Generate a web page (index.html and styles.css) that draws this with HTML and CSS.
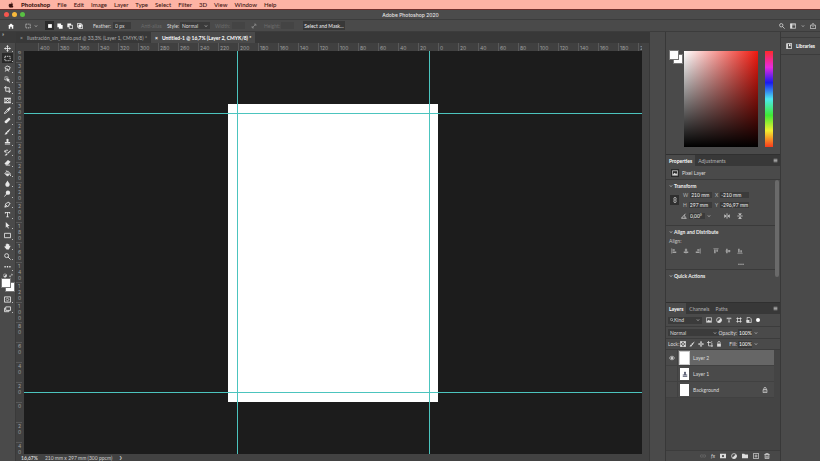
FILE: index.html
```
<!DOCTYPE html>
<html lang="en">
<head>
    <meta charset="UTF-8">
    <meta name="viewport" content="width=device-width, initial-scale=1.0">
    <title>Adobe Photoshop 2020</title>
    <link rel="stylesheet" href="styles.css">
</head>
<body>
    <!-- Icon set -->
    <svg class="sprite">
        <symbol id="apple" viewBox="0 0 16 16"><path class="f" d="M11 1c0 2-1.500 3-3 3 0-2 1.500-3 3-3zM8 5c1 0 2-1 3.500-.7 1 .1 1.800.6 2.300 1.300-2.500 1.700-2 4.600.5 5.600C13.500 13.500 12.300 15 11 15c-1.200 0-1.500-.6-2.800-.6S6.500 15 5.400 15C3 14.800.9 10.500 2 7.400 3.200 4 6.300 4 8 5z"/></symbol>
        <symbol id="home" viewBox="0 0 16 16"><path class="f" d="M8 1L0 8h2v7h4v-5h4v5h4V8h2z"/></symbol>
        <symbol id="move" viewBox="0 0 16 16"><path d="M8 2v12M2 8h12"/><path class="f" d="M8 0l3 4H5zM8 16l3-4H5zM0 8l4-3v6zM16 8l-4-3v6z"/></symbol>
        <symbol id="marquee" viewBox="0 0 16 16"><path stroke-dasharray="3 2" d="M2 3h12v10H2z"/></symbol>
        <symbol id="lasso" viewBox="0 0 16 16"><path d="M5 11L2 6l5-4 7 3-2 6-6 1zM5 11l-2 4M6 7l5 8"/></symbol>
        <symbol id="select" viewBox="0 0 16 16"><path stroke-dasharray="2 1" d="M2 2h7v7H2z"/><path class="f" d="M5 4l9 5-3 1 3 4-2 1-3-4-2 2z"/></symbol>
        <symbol id="crop" viewBox="0 0 16 16"><path d="M4 0v12h12M0 4h12v12"/></symbol>
        <symbol id="frame" viewBox="0 0 16 16"><path d="M2 3h12v10H2zM2 3l12 10M14 3L2 13M0 3h16M0 13h16"/></symbol>
        <symbol id="dropper" viewBox="0 0 16 16"><path d="M8 6l-6 6-1 3 3-1 6-6"/><path class="f" d="M7 4l2 0 3-3c2-1 4 1 3 3l-3 3v2l-1 1-5-5z"/></symbol>
        <symbol id="heal" viewBox="0 0 16 16"><path class="f" d="M2 9l8-7c3-1 5 2 4 4l-8 8c-3 1-6-2-4-5z"/></symbol>
        <symbol id="brush" viewBox="0 0 16 16"><path class="f" d="M15 1l-9 7 3 3 6-9zM6 9c-3 0-2 4-5 5 4 2 7 0 7-3z"/></symbol>
        <symbol id="stamp" viewBox="0 0 16 16"><path class="f" d="M6 7c-3-7 7-7 4 0v2h4v3H2V9h4zM2 13h12v2H2z"/></symbol>
        <symbol id="history" viewBox="0 0 16 16"><path class="f" d="M15 3l-8 6 2 2 7-7zM6 10c-3 0-2 4-5 4 4 2 6 0 7-2z"/><path d="M2 7c0-4 4-5 7-4M2 3v4h4"/></symbol>
        <symbol id="eraser" viewBox="0 0 16 16"><path class="f" d="M9 2l6 4-6 7H4l-3-3z"/><path d="M4 14h10"/></symbol>
        <symbol id="bucket" viewBox="0 0 16 16"><path d="M2 8l6-6 6 6-6 6zM5 1l4 5"/><path class="f" d="M2 8h12l-6 6zM15 9c2 3 1 5 0 5s-2-2 0-5z"/></symbol>
        <symbol id="drop" viewBox="0 0 16 16"><path class="f" d="M8 1c2 4 5 6 5 9 0 7-10 7-10 0 0-3 3-5 5-9z"/></symbol>
        <symbol id="dodge" viewBox="0 0 16 16"><circle class="f" cx="9" cy="6" r="5"/><path d="M6 9l-5 6"/></symbol>
        <symbol id="pen" viewBox="0 0 16 16"><path d="M2 14l2-8 6-3 3 3-3 6zM2 14l5-5M10 2l4 4"/></symbol>
        <symbol id="type" viewBox="0 0 16 16"><path class="f" d="M2 2h12v4h-1.500L12 4H9v8l2 1v1H5v-1l2-1V4H4l-.5 2H2z"/></symbol>
        <symbol id="arrow" viewBox="0 0 16 16"><path class="f" d="M4 0l9 9H9l2 5-2 1-2-5-3 3z"/></symbol>
        <symbol id="rect" viewBox="0 0 16 16"><path d="M1 3h14v10H1z"/></symbol>
        <symbol id="hand" viewBox="0 0 16 16"><path class="f" d="M4 8V3h2V1h2v1h2v1h2v4l2-1 1 1-4 8H6L1 9l1-2z"/></symbol>
        <symbol id="search" viewBox="0 0 16 16"><circle cx="6" cy="6" r="4.500"/><path d="M9 9l6 6"/></symbol>
        <symbol id="dots" viewBox="0 0 16 16"><path class="f" d="M1 7h3v3H1zM6.500 7h3v3h-3zM12 7h3v3h-3z"/></symbol>
        <symbol id="mask" viewBox="0 0 16 16"><path d="M1 2h14v12H1z"/><circle cx="8" cy="8" r="3" stroke-dasharray="2 1"/></symbol>
        <symbol id="screen" viewBox="0 0 16 16"><path d="M4 2h11v8H4zM4 5H1v8h10v-3"/></symbol>
        <symbol id="newsel" viewBox="0 0 16 16"><path class="f" d="M3 3h10v10H3z"/></symbol>
        <symbol id="addsel" viewBox="0 0 16 16"><path class="f" d="M1 1h10v4h4v10H5v-4H1z"/></symbol>
        <symbol id="subsel" viewBox="0 0 16 16"><path class="f" d="M1 1h10v4H5v6H1z"/><path d="M6 6h9v9H6z"/></symbol>
        <symbol id="intsel" viewBox="0 0 16 16"><path d="M1 1h10v10H1zM5 5h10v10H5z"/><path class="f" d="M5 5h6v6H5z"/></symbol>
        <symbol id="swap" viewBox="0 0 16 16"><path d="M3 13L13 3M8 3h5v5M3 8v5h5"/></symbol>
        <symbol id="chev" viewBox="0 0 16 16"><path d="M3 5l5 6 5-6"/></symbol>
        <symbol id="workspace" viewBox="0 0 16 16"><path d="M1 2h14v12H1zM1 5h14"/><path class="f" d="M1 2h5v12H1z"/></symbol>
        <symbol id="share" viewBox="0 0 16 16"><path d="M5 6H1v9h14V6h-4M8 11V2M5 4l3-3 3 3"/></symbol>
        <symbol id="book" viewBox="0 0 16 16"><path d="M4 1h11v14H4zM1 1v14h3"/><path class="f" d="M8 3h4v6l-2-2-2 2z"/></symbol>
        <symbol id="menu" viewBox="0 0 16 16"><path d="M2 4h12M2 8h12M2 12h12"/></symbol>
        <symbol id="image" viewBox="0 0 16 16"><path d="M1 2h14v12H1z"/><path class="f" d="M2 13l4-6 3 3 2-2 3 5z"/></symbol>
        <symbol id="link" viewBox="0 0 16 16"><path d="M5 7V4c0-4 6-4 6 0v3M5 9v3c0 4 6 4 6 0V9M8 5v6"/></symbol>
        <symbol id="angle" viewBox="0 0 16 16"><path d="M15 14H1L12 2M8 6c3 2 3 5 3 8"/></symbol>
        <symbol id="fliph" viewBox="0 0 16 16"><path d="M8 1v14"/><path class="f" d="M1 3l5 5-5 5zM15 3l-5 5 5 5z"/></symbol>
        <symbol id="flipv" viewBox="0 0 16 16"><path d="M1 8h14"/><path class="f" d="M3 1l5 5 5-5zM3 15l5-5 5 5z"/></symbol>
        <symbol id="al" viewBox="0 0 16 16"><path d="M2 1v14"/><path class="f" d="M4 3h6v4H4zM4 9h10v4H4z"/></symbol>
        <symbol id="ac" viewBox="0 0 16 16"><path d="M8 1v14"/><path class="f" d="M5 3h6v4H5zM2 9h12v4H2z"/></symbol>
        <symbol id="ar" viewBox="0 0 16 16"><path d="M14 1v14"/><path class="f" d="M6 3h6v4H6zM2 9h10v4H2z"/></symbol>
        <symbol id="at" viewBox="0 0 16 16"><path d="M1 2h14"/><path class="f" d="M3 4h4v10H3zM9 4h4v6H9z"/></symbol>
        <symbol id="am" viewBox="0 0 16 16"><path d="M1 8h14"/><path class="f" d="M3 2h4v12H3zM9 5h4v6H9z"/></symbol>
        <symbol id="ab" viewBox="0 0 16 16"><path d="M1 14h14"/><path class="f" d="M3 2h4v10H3zM9 6h4v6H9z"/></symbol>
        <symbol id="adjust" viewBox="0 0 16 16"><circle cx="8" cy="8" r="6.500"/><path class="f" d="M13 3a7 7 0 0 1-10 10z"/></symbol>
        <symbol id="shape" viewBox="0 0 16 16"><path d="M4 1v14M12 1v14M1 4h14M1 12h14"/></symbol>
        <symbol id="smart" viewBox="0 0 16 16"><path d="M3 1h7l4 4v10H3z"/><path class="f" d="M1 8h8v7H1z"/></symbol>
        <symbol id="checker" viewBox="0 0 16 16"><path d="M1 1h14v14H1z"/><path class="f" d="M1 1h5v5H1zM10 1h5v5h-5zM6 6h4v4H6zM1 10h5v5H1zM10 10h5v5h-5z"/></symbol>
        <symbol id="artboard" viewBox="0 0 16 16"><path d="M4 0v13h12M0 4h10M13 5v11M10 4l4-3"/></symbol>
        <symbol id="lock" viewBox="0 0 16 16"><path class="f" d="M3 7h10v8H3z"/><path d="M5 7V4c0-4 6-4 6 0v3"/></symbol>
        <symbol id="locko" viewBox="0 0 16 16"><path d="M3 7h10v8H3zM5 7V4c0-4 6-4 6 0v3M8 10v3"/></symbol>
        <symbol id="eye" viewBox="0 0 16 16"><path d="M1 8c4-6 10-6 14 0-4 6-10 6-14 0z"/><circle class="f" cx="8" cy="8" r="3"/></symbol>
        <symbol id="chain" viewBox="0 0 16 16"><path d="M7 5H3c-3 0-3 6 0 6h4M9 5h4c3 0 3 6 0 6H9M5 8h6"/></symbol>
        <symbol id="addmask" viewBox="0 0 16 16"><path class="f" fill-rule="evenodd" d="M0 2h16v12H0zM8 5a3 3 0 1 0 0 6 3 3 0 0 0 0-6z"/></symbol>
        <symbol id="folder" viewBox="0 0 16 16"><path class="f" d="M0 2h6l2 2h8v10H0z"/></symbol>
        <symbol id="plus" viewBox="0 0 16 16"><path d="M1 1h14v14H1zM8 4v8M4 8h8"/></symbol>
        <symbol id="trash" viewBox="0 0 16 16"><path d="M1 4h14M5 4V1h6v3M3 4v11h10V4M6 7v6M10 7v6"/></symbol>
    </svg>

    <div class="app">
        <nav class="menubar">
            <svg class="icon"><use href="#apple"/></svg>
            <a href="#" class="brand">Photoshop</a>
            <a href="#">File</a>
            <a href="#">Edit</a>
            <a href="#">Image</a>
            <a href="#">Layer</a>
            <a href="#">Type</a>
            <a href="#">Select</a>
            <a href="#">Filter</a>
            <a href="#">3D</a>
            <a href="#">View</a>
            <a href="#">Window</a>
            <a href="#">Help</a>
        </nav>

        <header class="titlebar">
            <div class="lights">
                <button class="light red" aria-label="Close"></button>
                <button class="light yellow" aria-label="Minimize"></button>
                <button class="light green" aria-label="Zoom"></button>
            </div>
            <h1>Adobe Photoshop 2020</h1>
        </header>

        <div class="options">
            <button class="home" aria-label="Home"><svg class="icon"><use href="#home"/></svg></button>
            <button class="preset" aria-label="Tool preset"><svg class="icon"><use href="#marquee"/></svg><svg class="icon tiny"><use href="#chev"/></svg></button>
            <div class="modes">
                <button class="on" aria-label="New selection"><svg class="icon"><use href="#newsel"/></svg></button>
                <button aria-label="Add"><svg class="icon"><use href="#addsel"/></svg></button>
                <button aria-label="Subtract"><svg class="icon"><use href="#subsel"/></svg></button>
                <button aria-label="Intersect"><svg class="icon"><use href="#intsel"/></svg></button>
            </div>
            <label class="feather">Feather: <input type="text" value="0 px"></label>
            <span class="anti dim">Anti-alias</span>
            <label class="style">Style:
                <span class="drop"><select><option>Normal</option></select><svg class="icon tiny"><use href="#chev"/></svg></span>
            </label>
            <label class="size dim">Width: <input type="text" disabled></label>
            <svg class="icon swap"><use href="#swap"/></svg>
            <label class="size dim">Height: <input type="text" disabled></label>
            <button class="mask">Select and Mask...</button>
            <div class="shortcuts">
                <svg class="icon"><use href="#search"/></svg>
                <svg class="icon"><use href="#workspace"/></svg>
                <svg class="icon tiny"><use href="#chev"/></svg>
                <svg class="icon"><use href="#share"/></svg>
            </div>
        </div>

        <main class="workspace">
            <aside class="toolbar">
                <div class="grip">»</div>
                <div class="tools" id="tools"></div>
                <div class="mini"><svg class="icon"><use href="#adjust"/></svg><svg class="icon"><use href="#swap"/></svg></div>
                <div class="swatches"><i></i><i></i></div>
                <button class="tool" aria-label="Quick mask"><svg class="icon"><use href="#mask"/></svg></button>
                <button class="tool" aria-label="Screen mode"><svg class="icon"><use href="#screen"/></svg></button>
            </aside>

            <section class="document">
                <div class="tabs">
                    <a href="#" class="tab"><span>×</span>Ilustración_sin_titulo.psd @ 33,3% (Layer 1, CMYK/8) *</a>
                    <a href="#" class="tab active"><span>×</span>Untitled-1 @ 16,7% (Layer 2, CMYK/8) *</a>
                </div>
                <div class="view">
                    <div class="corner"></div>
                    <div class="ruler-h" id="rulerH"></div>
                    <div class="ruler-v"><div class="marks" id="rulerV"></div></div>
                    <div class="canvas">
                        <div class="page"></div>
                        <div class="guide h top"></div>
                        <div class="guide h bottom"></div>
                        <div class="guide v left"></div>
                        <div class="guide v right"></div>
                    </div>
                    <div class="scroll"></div>
                </div>
                <footer class="status"><b>16,67%</b><span>210 mm x 297 mm (300 ppcm)</span><span class="more">❯</span></footer>
            </section>

            <div class="dock"></div>

            <aside class="panels">
                <section class="color">
                    <div class="swatches"><i></i><i></i></div>
                    <div class="field"></div>
                    <div class="hue"></div>
                </section>

                <section class="properties">
                    <div class="panel-tabs">
                        <button class="active">Properties</button>
                        <button>Adjustments</button>
                        <svg class="icon menu"><use href="#menu"/></svg>
                    </div>
                    <div class="kind"><svg class="icon boxed"><use href="#image"/></svg>Pixel Layer</div>
                    <div class="props">
                        <div class="groups">
                            <div class="group transform">
                                <h2><svg class="icon tiny"><use href="#chev"/></svg>Transform</h2>
                                <div class="fields">
                                    <button class="link" aria-label="Link"><svg class="icon"><use href="#link"/></svg></button>
                                    <label>W <input type="text" value="210 mm"></label>
                                    <label>X <input type="text" value="-210 mm"></label>
                                    <label>H <input type="text" value="297 mm"></label>
                                    <label>Y <input type="text" value="-296,97 mm"></label>
                                </div>
                                <div class="rotate">
                                    <svg class="icon"><use href="#angle"/></svg>
                                    <input type="text" value="0,00°" aria-label="Angle"><svg class="icon tiny"><use href="#chev"/></svg>
                                    <svg class="icon flip"><use href="#fliph"/></svg>
                                    <svg class="icon"><use href="#flipv"/></svg>
                                </div>
                            </div>
                            <div class="group align">
                                <h2><svg class="icon tiny"><use href="#chev"/></svg>Align and Distribute</h2>
                                <p>Align:</p>
                                <div class="align-row">
                                    <svg class="icon"><use href="#al"/></svg>
                                    <svg class="icon"><use href="#ac"/></svg>
                                    <svg class="icon"><use href="#ar"/></svg>
                                    <svg class="icon split"><use href="#at"/></svg>
                                    <svg class="icon"><use href="#am"/></svg>
                                    <svg class="icon"><use href="#ab"/></svg>
                                </div>
                                <svg class="icon more"><use href="#dots"/></svg>
                            </div>
                            <div class="group">
                                <h2><svg class="icon tiny"><use href="#chev"/></svg>Quick Actions</h2>
                            </div>
                        </div>
                        <div class="bar"></div>
                    </div>
                </section>

                <section class="layers">
                    <div class="panel-tabs">
                        <button class="active">Layers</button>
                        <button>Channels</button>
                        <button>Paths</button>
                        <svg class="icon menu"><use href="#menu"/></svg>
                    </div>
                    <div class="row filter">
                        <span class="drop wide"><svg class="icon tiny"><use href="#search"/></svg><select aria-label="Filter"><option>Kind</option></select><svg class="icon tiny"><use href="#chev"/></svg></span>
                        <svg class="icon"><use href="#image"/></svg>
                        <svg class="icon"><use href="#adjust"/></svg>
                        <svg class="icon"><use href="#type"/></svg>
                        <svg class="icon"><use href="#shape"/></svg>
                        <svg class="icon"><use href="#smart"/></svg>
                        <i class="toggle"></i>
                    </div>
                    <div class="row">
                        <span class="drop blend"><select aria-label="Blend mode"><option>Normal</option></select><svg class="icon tiny"><use href="#chev"/></svg></span>
                        <label class="amount">Opacity: <input type="text" value="100%"></label><svg class="icon tiny"><use href="#chev"/></svg>
                    </div>
                    <div class="row locks">
                        <span>Lock:</span>
                        <svg class="icon"><use href="#checker"/></svg>
                        <svg class="icon"><use href="#brush"/></svg>
                        <svg class="icon"><use href="#move"/></svg>
                        <svg class="icon"><use href="#artboard"/></svg>
                        <svg class="icon"><use href="#lock"/></svg>
                        <label class="amount">Fill: <input type="text" value="100%"></label><svg class="icon tiny"><use href="#chev"/></svg>
                    </div>
                    <ul class="list">
                        <li class="selected"><span class="vis"><svg class="icon"><use href="#eye"/></svg></span><span class="thumb"></span>Layer 2</li>
                        <li><span class="vis"></span><span class="thumb"><svg class="icon art"><use href="#stamp"/></svg></span>Layer 1</li>
                        <li><span class="vis"></span><span class="thumb"></span>Background<svg class="icon locked"><use href="#locko"/></svg></li>
                    </ul>
                    <div class="actions">
                        <svg class="icon dim"><use href="#chain"/></svg>
                        <em>fx</em>
                        <svg class="icon"><use href="#addmask"/></svg>
                        <svg class="icon"><use href="#adjust"/></svg>
                        <svg class="icon"><use href="#folder"/></svg>
                        <svg class="icon"><use href="#plus"/></svg>
                        <svg class="icon"><use href="#trash"/></svg>
                    </div>
                </section>
            </aside>

            <aside class="libraries">
                <button><svg class="icon"><use href="#book"/></svg>Libraries</button>
            </aside>
        </main>
    </div>

    <script src="script.js"></script>
</body>
</html>
```
FILE: styles.css
```
* {
    margin: 0;
    padding: 0;
    box-sizing: border-box;
}

body {
    background-color: #4a4a4a;
    color: #dcdcdc;
    font-family: Lato, "Liberation Sans", sans-serif;
    font-size: 5px;
    line-height: 6px;
    overflow: hidden;
}

a {
    color: inherit;
    text-decoration: none;
}

button, input, select {
    font: inherit;
    color: inherit;
    background: none;
    border: none;
    appearance: none;
    min-width: 0;
}

button {
    display: flex;
    align-items: center;
    justify-content: center;
}

.sprite {
    display: none;
}

.icon {
    width: 6px;
    height: 6px;
    flex: none;
    display: block;
    fill: none;
    stroke: currentColor;
    stroke-width: 2;
}

.icon.tiny {
    width: 4px;
    height: 4px;
}

.f {
    fill: currentColor;
    stroke: none;
}

.dim {
    color: #6c6c6c;
}

.app {
    display: flex;
    flex-direction: column;
    height: 100vh;
}

/* Menu bar */
.menubar {
    display: flex;
    align-items: center;
    gap: 7px;
    height: 9px;
    padding-left: 8px;
    background-color: #fdb3a4;
    color: #3a1410;
    font-size: 6px;
    font-weight: 500;
}

.menubar .brand {
    font-weight: 900;
}

.titlebar {
    display: flex;
    align-items: center;
    height: 10px;
    border-top: 1px solid #70302c;
    padding-left: 4px;
    background-color: #4b4b4b;
}

.titlebar h1 {
    flex: 1;
    padding-right: 24px;
    text-align: center;
    font-family: Inter, "Liberation Sans", sans-serif;
    font-size: 5px;
    font-weight: 500;
    color: #e4e4e4;
}

.lights {
    display: flex;
    gap: 3px;
}

.light {
    width: 5px;
    height: 5px;
    border-radius: 50%;
}

.red { background-color: #f5564e; }
.yellow { background-color: #f6b93b; }
.green { background-color: #58c043; }

/* Options bar */
.options {
    display: flex;
    align-items: center;
    height: 13px;
    border-top: 1px solid #3c3c3c;
    border-bottom: 1px solid #3c3c3c;
    padding: 0 4px 0 8px;
    background-color: #4a4a4a;
}

.options input, .drop {
    height: 7px;
    background-color: #3b3b3b;
    padding: 0 2px;
}

.drop {
    display: flex;
    align-items: center;
}

.drop select {
    flex: 1;
}

.home {
    color: #ffffff;
    margin-right: 11px;
}

.preset {
    gap: 3px;
    padding-right: 7px;
}

.modes {
    display: flex;
    gap: 1px;
    padding-right: 9px;
}

.modes button {
    width: 9px;
    height: 9px;
    color: #ffffff;
}

.modes .on {
    background-color: #2c2c2c;
}

.options label {
    display: flex;
    align-items: center;
    justify-content: space-between;
}

.feather {
    width: 38px;
}

.feather input {
    width: 18px;
}

.anti {
    width: 36px;
    padding-left: 10px;
}

.style {
    width: 43px;
}

.style .drop {
    width: 30px;
}

.options .size {
    width: 30px;
    margin-left: 5px;
}

.options .size input {
    width: 13px;
    background-color: #444444;
}

.swap {
    margin: 0 2px 0 6px;
    color: #8c8c8c;
}

.mask {
    width: 42px;
    height: 9px;
    margin-left: 9px;
    background-color: #383838;
    color: #f0f0f0;
    white-space: nowrap;
}

.shortcuts {
    display: flex;
    align-items: center;
    gap: 5px;
    margin-left: auto;
}

/* Main area */
.workspace {
    display: flex;
    flex: 1;
    min-height: 0;
}

.toolbar {
    display: flex;
    flex-direction: column;
    align-items: center;
    width: 16px;
    background-color: #4a4a4a;
    border-right: 1px solid #3a3a3a;
}

.grip {
    align-self: stretch;
    height: 11px;
    padding-left: 2px;
    line-height: 5px;
    background-color: #3a3a3a;
}

.tools {
    display: flex;
    flex-direction: column;
    justify-content: space-between;
    height: 229px;
}

.tool {
    position: relative;
    width: 11px;
    height: 10px;
    color: #e6e6e6;
}

.tool .icon {
    width: 7px;
    height: 7px;
}

.tool::after {
    content: "";
    position: absolute;
    right: 0;
    bottom: 1px;
    width: 1px;
    height: 1px;
    background-color: #bbbbbb;
}

.tool.on {
    background-color: #2a2a2a;
}

.mini {
    display: flex;
    gap: 2px;
    padding: 1px 0;
}

.mini .icon {
    width: 4px;
    height: 5px;
}

.swatches {
    position: relative;
    width: 12px;
    height: 13px;
    margin-bottom: 2px;
}

.swatches i {
    position: absolute;
    left: 0;
    top: 0;
    z-index: 1;
    width: 8px;
    height: 8px;
    background-color: #ffffff;
    outline: 1px solid #777777;
}

.swatches i + i {
    left: 4px;
    top: 4px;
    z-index: 0;
}

/* Document */
.document {
    display: flex;
    flex-direction: column;
    flex: 1;
    min-width: 0;
}

.tabs {
    display: flex;
    height: 11px;
    background-color: #383838;
}

.tab {
    display: flex;
    align-items: center;
    padding: 0 4px;
    color: #b0b0b0;
    white-space: nowrap;
}

.tab span {
    margin-right: 4px;
}

.tab.active {
    background-color: #4a4a4a;
    color: #ffffff;
    font-weight: 700;
}

.view {
    flex: 1;
    min-height: 0;
    display: grid;
    grid-template-columns: 8px 1fr 7px;
    grid-template-rows: 8px 1fr;
    background-color: #3c3c3c;
}

.corner, .ruler-h, .ruler-v {
    background-color: #404040;
    color: #a0a0a0;
    font-family: Inter, "Liberation Sans", sans-serif;
    overflow: hidden;
}

.ruler-h {
    display: flex;
    padding-left: 14px;
}

.ruler-h span {
    flex: none;
    width: 20px;
    height: 8px;
    padding: 2px 0 0 1px;
    border-left: 1px solid #585858;
}

.marks {
    margin-top: -9px;
}

.marks span {
    display: block;
    width: 6px;
    height: 20px;
    padding-left: 2px;
    border-top: 1px solid #585858;
    word-break: break-all;
}

.canvas {
    position: relative;
    background-color: #1c1c1c;
    overflow: hidden;
}

.page {
    position: absolute;
    left: 204px;
    top: 53px;
    width: 210px;
    height: 298px;
    background-color: #ffffff;
}

.guide {
    position: absolute;
    background-color: #4cc4be;
}

.guide.h {
    left: 0;
    right: 0;
    height: 1px;
}

.guide.v {
    top: 0;
    bottom: 0;
    width: 1px;
}

.guide.top { top: 62px; }
.guide.bottom { top: 341px; }
.guide.left { left: 213px; }
.guide.right { left: 405px; }

.scroll {
    background-color: #424242;
    grid-column: 3;
    grid-row: 1 / 3;
}

.status {
    display: flex;
    align-items: center;
    gap: 7px;
    height: 7px;
    padding-left: 5px;
    background-color: #424242;
    color: #d0d0d0;
}

.status .more {
    font-size: 4px;
}

.dock {
    width: 17px;
    background-color: #4a4a4a;
    border-left: 1px solid #383838;
    border-right: 1px solid #383838;
}

/* Panels */
.panels {
    display: flex;
    flex-direction: column;
    width: 114px;
}

.color {
    display: flex;
    height: 122px;
    padding: 19px 7px 0 4px;
}

.color .swatches {
    margin-right: 2px;
}

.field {
    flex: 1;
    height: 96px;
    background-image: linear-gradient(to top, #000000, transparent), linear-gradient(to right, #ffffff, #f0190f);
}

.hue {
    width: 8px;
    height: 96px;
    margin-left: 7px;
    background-image: linear-gradient(#ff2a2a, #e62adf 17%, #1a1af0 33%, #4de8f0 50%, #3fea34 67%, #f2ee30 83%, #fa3a1c);
}

.panel-tabs {
    display: flex;
    align-items: center;
    height: 12px;
    background-color: #383838;
    border-top: 1px solid #303030;
    padding-right: 2px;
}

.panel-tabs button {
    height: 11px;
    padding: 0 3px;
    color: #b4b4b4;
}

.panel-tabs .active {
    background-color: #4a4a4a;
    color: #ffffff;
    font-weight: 700;
}

.panel-tabs .menu {
    width: 5px;
    height: 5px;
    margin-left: auto;
}

.properties {
    height: 148px;
}

.kind {
    display: flex;
    align-items: center;
    gap: 3px;
    height: 14px;
    padding-left: 5px;
    border-bottom: 1px solid #3a3a3a;
}

.boxed {
    width: 8px;
    height: 8px;
    padding: 1px;
    background-color: #2b2b2b;
}

.props {
    display: flex;
}

.groups {
    flex: 1;
}

.group {
    padding: 3px 3px 0;
    border-bottom: 1px solid #3a3a3a;
}

.group:last-child {
    border-bottom: none;
}

.group h2 {
    display: flex;
    align-items: center;
    gap: 1px;
    font-size: 5px;
    font-weight: 700;
    color: #f0f0f0;
}

.transform {
    height: 46px;
}

.align {
    height: 44px;
}

.fields {
    display: grid;
    grid-template-columns: 14px 32px 34px;
    grid-template-rows: 8px 8px;
    row-gap: 2px;
    margin-top: 2px;
}

.fields .link {
    grid-row: 1 / 3;
    width: 9px;
    height: 10px;
    align-self: center;
    margin-left: 1px;
    background-color: #2f2f2f;
}

.fields label {
    display: flex;
    align-items: center;
    gap: 2px;
    color: #b8b8b8;
}

.fields input, .rotate input {
    flex: 1;
    height: 6px;
    padding-left: 1px;
    margin-right: 3px;
    background-color: #3b3b3b;
    color: #f0f0f0;
}

.fields label:nth-of-type(even) input {
    margin-right: 0;
}

.rotate {
    display: flex;
    align-items: center;
    height: 8px;
    margin-top: 3px;
    padding-left: 12px;
    gap: 2px;
}

.rotate input {
    flex: none;
    width: 16px;
    margin-right: 0;
}

.rotate .flip {
    margin: 0 5px 0 11px;
}

.align p {
    margin-top: 3px;
    color: #c4c4c4;
}

.align-row {
    display: flex;
    gap: 6px;
    margin-top: 4px;
    padding-left: 2px;
    color: #a4a4a4;
}

.align-row .split {
    margin-left: 6px;
}

.align .more {
    margin: 7px 0 0 69px;
}

.bar {
    width: 4px;
    height: 97px;
    margin-right: 1px;
    border-radius: 2px;
    background-color: #6a6a6a;
}

/* Layers panel */
.layers {
    display: flex;
    flex-direction: column;
    flex: 1;
}

.row {
    display: flex;
    align-items: center;
    height: 12px;
    padding: 0 22px 0 2px;
    border-bottom: 1px solid #3c3c3c;
}

.filter {
    height: 13px;
    padding-right: 0;
    gap: 4px;
}

.wide {
    width: 34px;
}

.blend {
    width: 51px;
}

.toggle {
    width: 4px;
    height: 4px;
    border-radius: 50%;
    background-color: #ffffff;
}

.row .amount {
    display: flex;
    align-items: center;
    gap: 1px;
    margin: 0 2px 0 auto;
}

.row input {
    width: 14px;
    height: 7px;
    padding-left: 1px;
    background-color: #3b3b3b;
    color: #ffffff;
}

.locks {
    height: 11px;
}

.locks .icon + .icon {
    margin-left: 3px;
}

.locks span {
    width: 12px;
}

.list {
    flex: 1;
    list-style: none;
    padding-right: 6px;
    background-color: #444444;
}

.list li {
    display: flex;
    align-items: center;
    height: 16px;
    background-color: #4a4a4a;
    border-bottom: 1px solid #414141;
}

.list .selected {
    background-color: #666666;
}

.vis {
    display: flex;
    align-items: center;
    justify-content: center;
    align-self: stretch;
    width: 12px;
    background-color: #4a4a4a;
    border-right: 1px solid #414141;
}

.thumb {
    display: flex;
    align-items: center;
    justify-content: center;
    width: 9px;
    height: 12px;
    margin: 0 4px 0 2px;
    background-color: #ffffff;
}

.selected .thumb {
    outline: 1px solid #cccccc;
}

.art {
    color: #4a4f66;
}

.locked {
    margin: 0 6px 0 auto;
}

.actions {
    display: flex;
    align-items: center;
    justify-content: flex-end;
    gap: 5px;
    height: 11px;
    padding-right: 10px;
    background-color: #484848;
    border-top: 1px solid #3c3c3c;
}

.libraries {
    width: 40px;
    border-left: 1px solid #383838;
    padding-top: 5px;
}

.libraries button {
    gap: 4px;
    width: 100%;
    height: 18px;
    border-top: 1px solid #3c3c3c;
    border-bottom: 1px solid #3c3c3c;
    color: #ffffff;
    font-weight: 700;
}
```
FILE: script.js
```
const tools = ['move', 'marquee', 'lasso', 'select', 'crop', 'frame', 'dropper', 'heal', 'brush', 'stamp', 'history',
    'eraser', 'bucket', 'drop', 'dodge', 'pen', 'type', 'arrow', 'rect', 'hand', 'search', 'dots'];

document.getElementById('tools').innerHTML = tools.map(name =>
    `<button class="tool${name === 'marquee' ? ' on' : ''}" aria-label="${name}"><svg class="icon"><use href="#${name}"/></svg></button>`
).join('');

// Ruler labels, one every 20 mm
function fillRuler(id, from, to) {
    let html = '';
    for (let mm = from; mm <= to; mm += 20) {
        html += `<span>${Math.abs(mm)}</span>`;
    }
    document.getElementById(id).innerHTML = html;
}

fillRuler('rulerH', -400, 200);
fillRuler('rulerV', -360, 40);
```
